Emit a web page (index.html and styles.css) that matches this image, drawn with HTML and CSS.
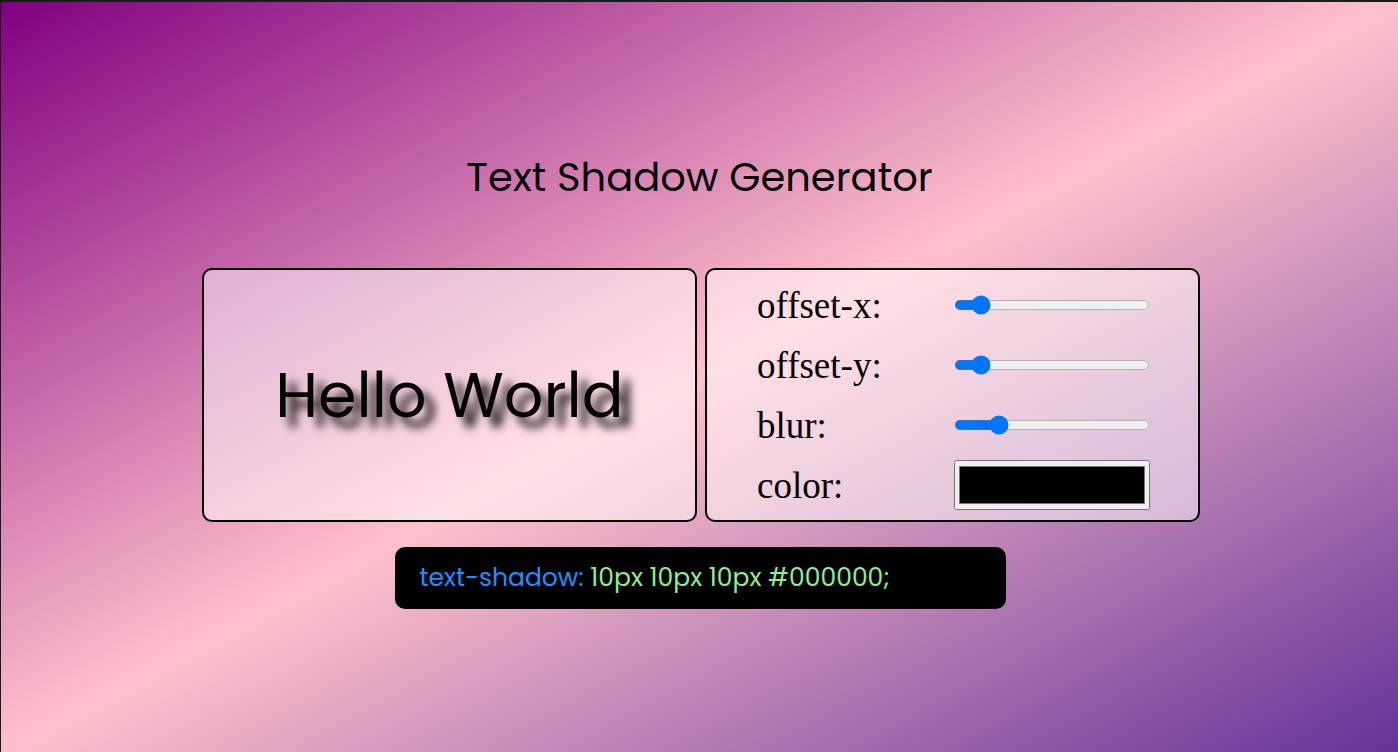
FILE: index.html
```html
<!DOCTYPE html>
<html lang="en">
<head>
<meta charset="utf-8">
<title>Text Shadow Generator</title>
<link rel="stylesheet" href="styles.css">
</head>
<body>
<main class="page">
  <h1 class="title">Text Shadow Generator</h1>
  <section class="panels">
    <div class="card preview">
      <p class="hello">Hello World</p>
    </div>
    <div class="card controls">
      <label class="label" for="ox">offset-x:</label>
      <input class="range" id="ox" type="range" min="0" max="100" value="10">
      <label class="label" for="oy">offset-y:</label>
      <input class="range" id="oy" type="range" min="0" max="100" value="10">
      <label class="label" for="bl">blur:</label>
      <input class="range" id="bl" type="range" min="0" max="50" value="10">
      <label class="label" for="co">color:</label>
      <input class="color" id="co" type="color" value="#000000">
    </div>
  </section>
  <div class="code"><span class="prop">text-shadow:</span>&nbsp;<span class="val">10px 10px 10px #000000;</span></div>
</main>
</body>
</html>
```
FILE: styles.css
```css
* { box-sizing: border-box; }
html, body { margin: 0; }
body {
  height: 100vh;
  border-top: 2px solid #1b1b1b;
  border-left: 1px solid #1b1b1b;
  background: linear-gradient(to bottom right, #800080, #ffc0cb, #663399);
  font-family: "Poppins", "Open Sans", sans-serif;
  overflow: hidden;
}
.page {
  display: flex;
  flex-direction: column;
  align-items: center;
  padding-top: 145px;
}
.title {
  margin: 0;
  font-weight: 400;
  font-size: 40px;
  line-height: 60px;
  color: #000;
}
.panels {
  margin-top: 61px;
  display: grid;
  grid-template-columns: 1fr 1fr;
  gap: 8px;
  width: 998px;
  margin-left: 3px;
}
.card {
  min-width: 0;
  height: 254px;
  border: 2px solid #000;
  border-radius: 10px;
  background: rgba(255, 255, 255, 0.5);
}
.preview {
  display: flex;
  align-items: center;
  justify-content: center;
}
.hello {
  margin: 0;
  font-size: 62px;
  color: #000;
  text-shadow: 10px 10px 10px #000000;
}
.controls {
  display: grid;
  grid-template-columns: 1fr 1fr;
  grid-auto-rows: 60px;
  align-items: center;
  padding: 5px 48px 0 50px;
}
.label {
  font-family: "Liberation Serif", "Times New Roman", serif;
  font-size: 37px;
  color: #000;
}
.range {
  zoom: 1.25;
  width: 157px;
  margin: 0;
}
.color {
  width: 100%;
  height: 50px;
  margin: 0;
}
.code {
  margin-top: 25px;
  margin-left: 1px;
  width: 611px;
  height: 62px;
  padding: 0 25px;
  display: flex;
  align-items: center;
  background: #000;
  border-radius: 10px;
  font-size: 25px;
}
.prop { color: #1e90ff; }
.val { color: #90ee90; }
```
